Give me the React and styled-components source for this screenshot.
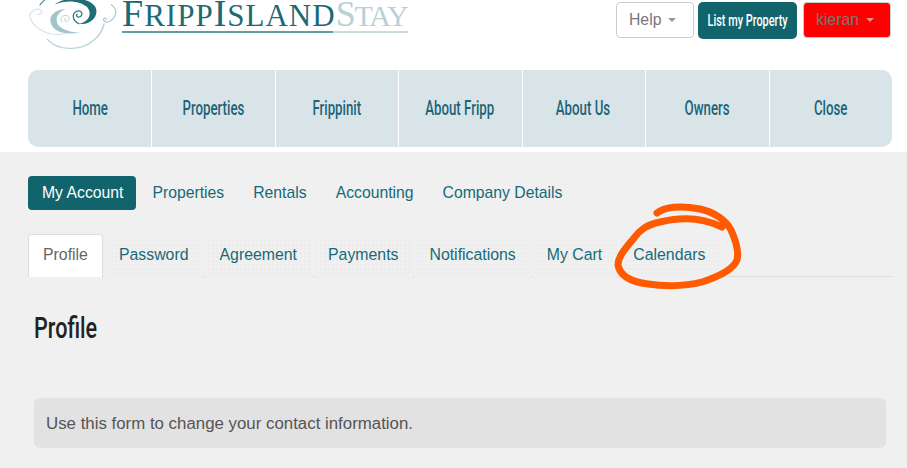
import React from "react"
import styled, { createGlobalStyle } from 'styled-components'

const Global = createGlobalStyle`
  html, body {
    margin: 0;
    padding: 0;
    background: #fff;
    font-family: "Liberation Sans", Arial, sans-serif;
    font-size: 15.75px;
  }
  * { box-sizing: border-box; }
`

const Page = styled.div`
  position: relative;
  width: 907px;
  height: 468px;
  overflow: hidden;
`

const Header = styled.header`
  height: 152px;
  padding: 0 15px 5px 28px;
  display: flex;
  flex-direction: column;
  justify-content: space-between;
`

const TopRow = styled.div`
  height: 70px;
  display: flex;
  justify-content: space-between;
  align-items: flex-start;
`

const Logo = styled.a`
  display: flex;
  align-items: flex-start;
  height: 54px;
  margin-left: -4px;
  overflow: hidden;
`

const LogoWords = styled.div`
  width: 286px;
  margin-left: -2px;
`

const LogoText = styled.div`
  height: 30px;
  margin-top: -4px;
  font-family: "Liberation Serif", serif;
  font-size: 31px;
  line-height: 34px;
  letter-spacing: 1px;
  white-space: nowrap;
  color: #1c6a73;
`

const BigLetter = styled.span`
  font-size: 38px;
`

const FadedWord = styled.span`
  color: #b9d0d6;
  font-size: 30px;
  letter-spacing: -1.2px;
  & > span {
    font-size: 36px;
  }
`

const LogoRule = styled.div`
  display: flex;
  height: 2px;
  margin-top: 5px;
`

const RulePart = styled.div`
  flex: ${p => p.$size};
  background: ${p => p.$color};
`

const Actions = styled.div`
  display: flex;
  padding: 2px 1px 0 0;
  gap: 4px;
`

const DropButton = styled.button`
  display: flex;
  align-items: center;
  gap: 7px;
  width: ${p => p.$width}px;
  height: 36px;
  padding: 0 12px;
  border: 1px solid #ccc;
  border-radius: 4px;
  background: ${p => p.$bg};
  color: #777;
  font: 15.75px "Liberation Sans", Arial, sans-serif;
  &::after {
    content: '';
    border-top: 4px solid ${p => p.$caret};
    border-left: 4px solid transparent;
    border-right: 4px solid transparent;
  }
`

const ListButton = styled.button`
  display: flex;
  align-items: center;
  justify-content: center;
  width: 99px;
  height: 37px;
  margin-right: 2px;
  padding: 0;
  border: 0;
  border-radius: 5px;
  background: #11646b;
  color: #fff;
  white-space: nowrap;
  overflow: hidden;
`

const Narrow = styled.span`
  display: inline-block;
  flex: none;
  font-family: Roboto, sans-serif;
  font-weight: 500;
  font-size: ${p => p.$size}px;
  transform: scaleX(${p => p.$scale});
  transform-origin: ${p => p.$origin || 'center'};
  white-space: nowrap;
`

const MainNav = styled.nav`
  display: grid;
  grid-template-columns: repeat(7, 1fr);
  height: 77px;
  border-radius: 10px;
  overflow: hidden;
  background: #d9e4e9;
`

const NavItem = styled.a`
  display: flex;
  align-items: center;
  justify-content: center;
  padding-right: ${p => p.$first ? '0' : '1px'};
  color: #1c6478;
  border-left: ${p => p.$first ? '0' : '1px solid #fff'};
`

const Content = styled.main`
  height: 316px;
  padding: 24px 15px 0 28px;
  background: #f0f0f0;
`

const Pills = styled.div`
  display: flex;
  gap: 2px;
`

const Pill = styled.a`
  height: 34px;
  padding: 0 13px 0 14px;
  line-height: 33px;
  border-radius: 4px;
  color: ${p => p.$active ? '#fff' : '#166a78'};
  background: ${p => p.$active ? '#11646b' : 'transparent'};
`

const Tabs = styled.div`
  display: flex;
  gap: 2px;
  height: 43px;
  margin-top: 24px;
  border-bottom: 1px solid #ddd;
`

const Tab = styled.a`
  height: 43px;
  padding: 0 14px 0 ${p => p.$active ? '14px' : '13px'};
  line-height: 40px;
  font-size: 15.85px;
  border: 1px solid ${p => p.$active ? '#ddd' : 'transparent'};
  border-bottom: 0;
  border-radius: 4px 4px 0 0;
  color: ${p => p.$active ? '#666' : '#166a78'};
  background: ${p => p.$active ? '#fff' : 'radial-gradient(#e9e9e9 0.6px, #f0f0f0 0.9px) 0 0 / 4px 4px'};
`

const Title = styled.h1`
  margin: 31px 0 0 6px;
  height: 38px;
  font-weight: 400;
  line-height: 38px;
  color: #222;
`

const Notice = styled.div`
  height: 50px;
  margin: 52px 6px 0 6px;
  padding: 0 12px;
  line-height: 51px;
  border-radius: 6px;
  background: #e2e2e2;
  color: #555;
  font-size: 16.85px;
`

const Scribble = styled.svg`
  position: absolute;
  left: 0;
  top: 0;
  pointer-events: none;
`

const LogoMark = () => (
  <svg width="100" height="54" viewBox="0 0 300 162" fill="none" strokeLinecap="round">
    <path d="M17 46C20 72 48 96 84 102C100 104 112 103 122 102" stroke="#d5e4e7" strokeWidth="3.5" />
    <path d="M17 46C22 30 38 24 50 30C58 38 50 46 42 42" stroke="#d5e4e7" strokeWidth="3.5" />
    <path d="M48 15C52 8 58 3 64 -2" stroke="#4d8f97" strokeWidth="3.5" />
    <path d="M70 118C100 152 170 156 210 120C226 106 236 92 240 72" stroke="#b9d3d8" strokeWidth="4" />
    <path d="M262 14C282 28 278 50 260 62C250 70 238 66 238 58C240 52 248 54 246 60" stroke="#a7c9cf" strokeWidth="3.5" />
    <path d="M125 26C95 28 74 46 80 68C88 94 120 106 168 98C130 96 100 84 98 62C97 46 108 34 125 26Z" fill="#a0c6cc" />
    <path d="M115 68C105 58 112 46 126 46C138 48 138 62 128 64C122 64 120 58 124 55" stroke="#b5d3d8" strokeWidth="3" />
    <path d="M92 14C120 -10 190 -12 214 20C228 50 196 78 165 71C195 66 205 40 190 22C170 2 125 -2 92 14Z" fill="#1c6f76" />
    <path d="M165 71C145 62 142 42 158 34C172 28 180 44 168 50C160 54 154 46 160 42" stroke="#1c6f76" strokeWidth="3.5" />
  </svg>
)

const navItems = ['Home', 'Properties', 'Frippinit', 'About Fripp', 'About Us', 'Owners', 'Close']
const pills = ['My Account', 'Properties', 'Rentals', 'Accounting', 'Company Details']
const tabs = ['Profile', 'Password', 'Agreement', 'Payments', 'Notifications', 'My Cart', 'Calendars']

const App = () => {
  return (
    <Page>
      <Global />
      <Header>
        <TopRow>
          <Logo>
            <LogoMark />
            <LogoWords>
              <LogoText>
                <BigLetter>F</BigLetter>RIPP<BigLetter>I</BigLetter>SLAND
                <FadedWord><BigLetter>S</BigLetter>TAY</FadedWord>
              </LogoText>
              <LogoRule>
                <RulePart $size={211} $color="#5f9ea6" />
                <RulePart $size={75} $color="#c9dde1" />
              </LogoRule>
            </LogoWords>
          </Logo>
          <Actions>
            <DropButton $width={78} $bg="#fff" $caret="#999">Help</DropButton>
            <ListButton><Narrow $size={16.5} $scale={0.66}>List my Property</Narrow></ListButton>
            <DropButton $width={88} $bg="#f00" $caret="#e88">kieran</DropButton>
          </Actions>
        </TopRow>
        <MainNav>
          {navItems.map((item, i) => (
            <NavItem key={item} $first={i === 0}>
              <Narrow $size={19.5} $scale={0.68}>{item}</Narrow>
            </NavItem>
          ))}
        </MainNav>
      </Header>
      <Content>
        <Pills>
          {pills.map((item, i) => <Pill key={item} $active={i === 0}>{item}</Pill>)}
        </Pills>
        <Tabs>
          {tabs.map((item, i) => <Tab key={item} $active={i === 0}>{item}</Tab>)}
        </Tabs>
        <Title><Narrow $size={30} $scale={0.72} $origin="left">Profile</Narrow></Title>
        <Notice>Use this form to change your contact information.</Notice>
      </Content>
      <Scribble width="907" height="468" fill="none">
        <path
          d="M657 213C664 207 680 205 700 209C714 212 726 220 731 230C736 241 739 252 737 260C734 268 724 274 708 280C692 286 668 287 648 284C632 282 620 276 618 265C618 256 626 248 634 238C640 230 646 225 660 222C676 218 700 216 722 227"
          stroke="#ff5a00"
          strokeWidth="7"
          strokeLinecap="round"
          strokeLinejoin="round"
        />
      </Scribble>
    </Page>
  )
}

export default App
